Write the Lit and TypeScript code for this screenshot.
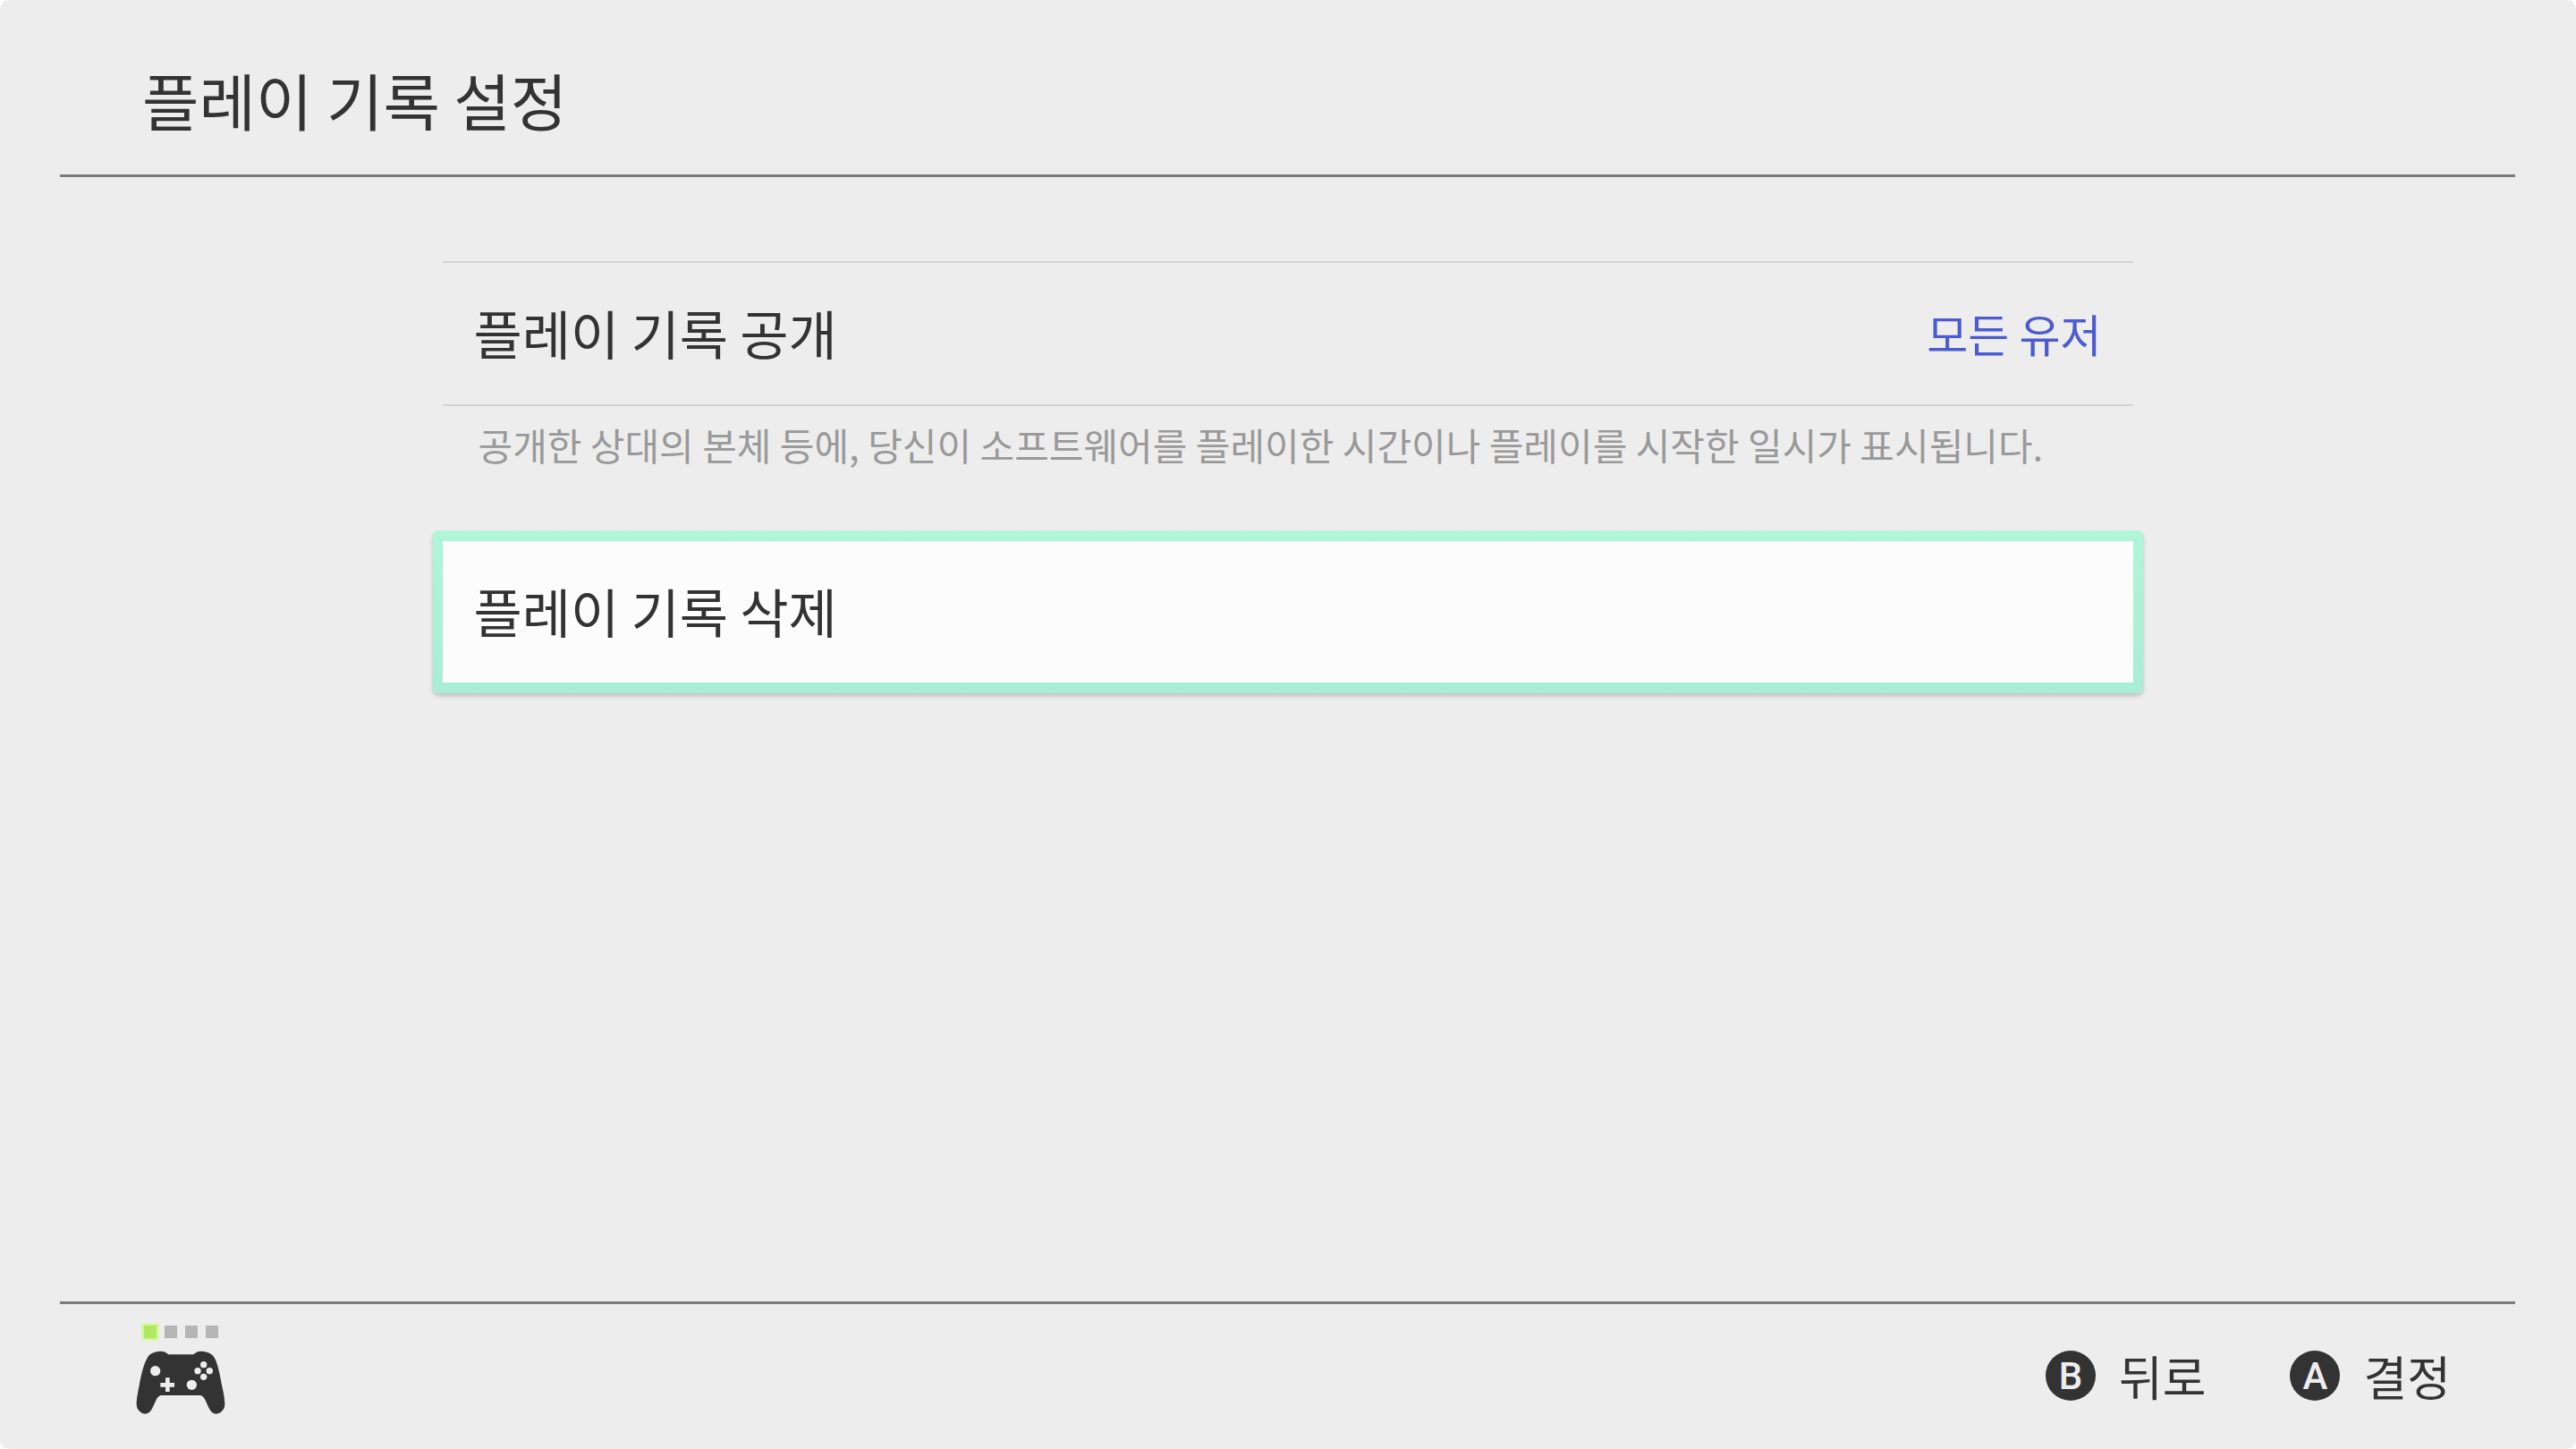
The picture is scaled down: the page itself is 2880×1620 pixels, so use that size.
import { LitElement, html, css, svg } from "lit";
import { customElement } from "lit/decorators.js";

const controllerIcon = svg`
  <path fill="#333" d="M104 238 C110 222 126 214 150 213 Q164 213 170 219 L176 224 H260 L266 219 Q272 213 286 213 C310 214 324 222 332 238 C342 258 348 290 354 322 C360 350 365 370 365 392 C365 402 360 412 350 419 Q334 428 322 418 C314 410 308 396 302 382 C298 372 292 364 284 361 H150 C142 364 136 372 132 382 C126 396 120 410 112 418 Q98 428 84 419 C74 412 69 402 69 392 C69 370 74 350 79 322 C85 290 92 258 104 238 Z"/>
  <g fill="#ededed">
    <circle cx="132" cy="279" r="17"/>
    <circle cx="254" cy="326" r="17"/>
    <path d="M166 302 H180 V319 H196 V333 H180 V349 H166 V333 H149 V319 H166 Z"/>
    <circle cx="294" cy="258" r="11"/>
    <circle cx="274" cy="279" r="11"/>
    <circle cx="314" cy="279" r="11"/>
    <circle cx="294" cy="299" r="11"/>
  </g>
`;

@customElement("app-root")
export class AppRoot extends LitElement {
  static styles = css`
    :host {
      display: block;
      background: #fff;
      color: #333;
      font-family: "Noto Sans CJK KR", sans-serif;
    }
    .page {
      box-sizing: border-box;
      min-height: 100vh;
      padding: 0 68px 0 67px;
      display: flex;
      flex-direction: column;
      background: #ededed;
      border-radius: 10px;
    }
    .header {
      padding: 63px 92px 36px;
      border-bottom: 3px solid #7c7c7c;
    }
    .title {
      margin: 0;
      font-size: 69px;
      font-weight: 400;
      line-height: 96px;
    }
    .main {
      flex: 1;
      box-sizing: border-box;
      width: 100%;
      max-width: 1890px;
      margin: 0 auto;
      padding-top: 94px;
    }
    button {
      margin: 0;
      border: 0;
      padding: 0;
      background: none;
      color: inherit;
      font: inherit;
      text-align: left;
      outline: none;
    }
    .row {
      box-sizing: border-box;
      width: 100%;
      display: flex;
      align-items: center;
      justify-content: space-between;
      padding: 33px 35px 35px;
      font-size: 59px;
      line-height: 90px;
    }
    .row.ruled {
      border-top: 2px solid #d3d3d3;
      border-bottom: 2px solid #d3d3d3;
    }
    .row.selected {
      width: calc(100% + 22px);
      margin: 0 -11px;
      border: solid transparent;
      border-width: 12px 11px;
      border-radius: 6px;
      background:
        linear-gradient(#fcfcfc, #fcfcfc) padding-box,
        linear-gradient(#b0f6d9, #a9ecd7) border-box;
      box-shadow: 0 3px 5px rgba(0, 0, 0, 0.2);
    }
    .value {
      color: #4c5bd0;
      font-size: 50px;
    }
    .note {
      margin: 0;
      padding: 11px 40px 64px;
      color: #999;
      font-size: 42px;
      line-height: 64px;
    }
    .footer {
      display: flex;
      align-items: flex-start;
      justify-content: space-between;
      border-top: 3px solid #7c7c7c;
      padding: 24px 72px 38px 85px;
    }
    .lamps {
      display: flex;
      gap: 9px;
      padding-left: 9px;
    }
    .lamp {
      width: 14px;
      height: 14px;
      background: #b5b5b5;
    }
    .lamp.on {
      background: #b1e863;
      box-shadow: 0 0 2px 2px #c8fb7e;
    }
    .controller {
      display: block;
      width: 100px;
      height: 72px;
      margin-top: 14px;
    }
    .actions {
      display: flex;
      gap: 94px;
      padding-top: 18px;
    }
    .action {
      display: flex;
      align-items: center;
      gap: 26px;
      font-size: 53px;
      line-height: 76px;
    }
    .key {
      width: 56px;
      height: 56px;
      border-radius: 50%;
      background: #333;
      color: #ededed;
      font-family: Roboto, sans-serif;
      font-size: 42px;
      font-weight: 500;
      line-height: 58px;
      text-align: center;
    }
  `;

  render() {
    return html`
      <div class="page">
        <header class="header">
          <h1 class="title">플레이 기록 설정</h1>
        </header>
        <main class="main">
          <button class="row ruled" type="button" aria-describedby="note">
            <span>플레이 기록 공개</span>
            <span class="value">모든 유저</span>
          </button>
          <p class="note" id="note">
            공개한 상대의 본체 등에, 당신이 소프트웨어를 플레이한 시간이나 플레이를 시작한 일시가 표시됩니다.
          </p>
          <button class="row selected" type="button">
            <span>플레이 기록 삭제</span>
          </button>
        </main>
        <footer class="footer">
          <div>
            <div class="lamps">
              ${[true, false, false, false].map(
                (on) => html`<span class="lamp ${on ? "on" : ""}"></span>`
              )}
            </div>
            <svg class="controller" viewBox="67 211 300 216" aria-hidden="true">
              ${controllerIcon}
            </svg>
          </div>
          <div class="actions">
            <button class="action" type="button"><span class="key">B</span>뒤로</button>
            <button class="action" type="button"><span class="key">A</span>결정</button>
          </div>
        </footer>
      </div>
    `;
  }
}
